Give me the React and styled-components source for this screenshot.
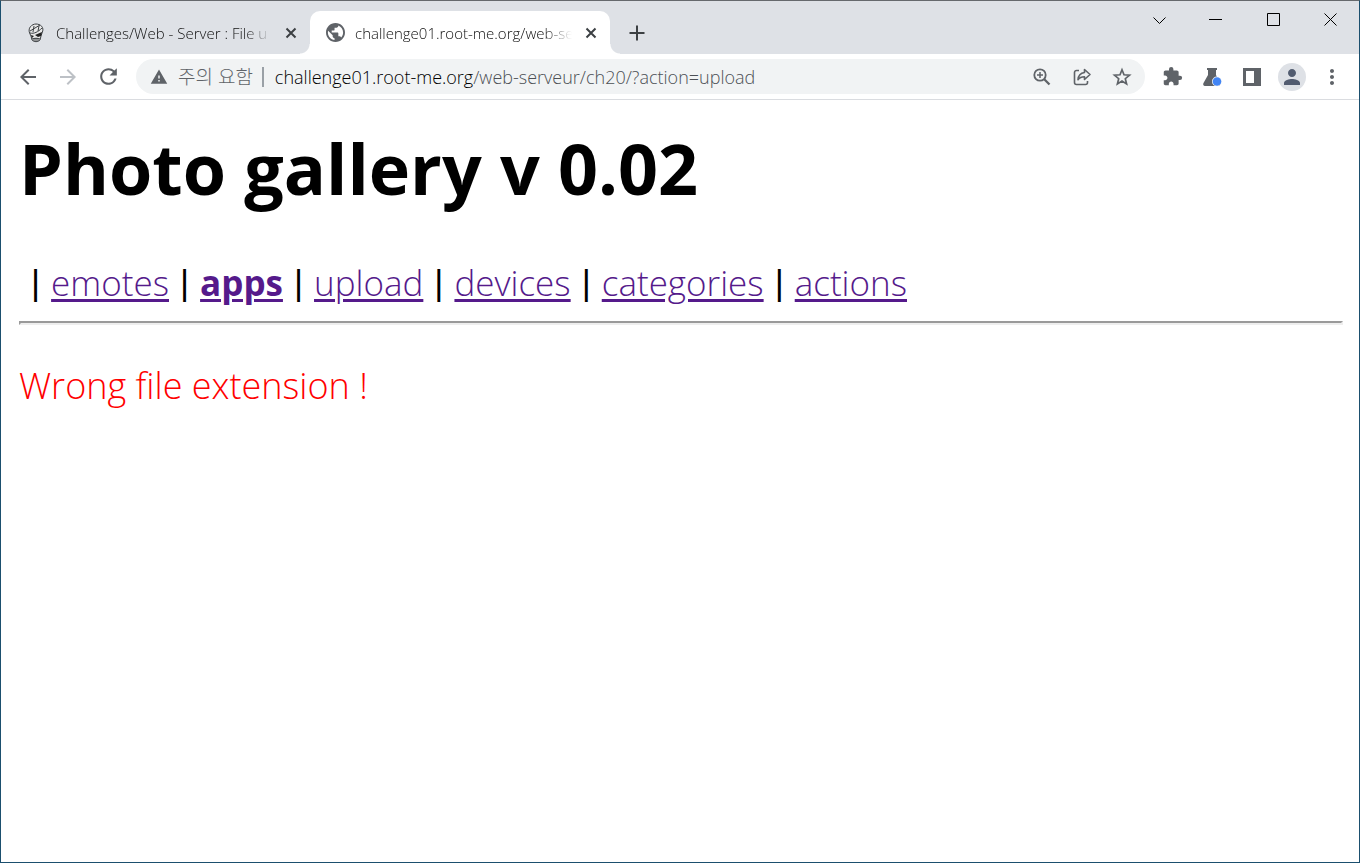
import React from "react";
import styled, { createGlobalStyle } from "styled-components";
import {
  MdArrowBack, MdArrowForward, MdRefresh, MdWarning,
  MdExtension, MdPublic, MdPerson, MdMoreVert,
} from "react-icons/md";

const Global = createGlobalStyle`
  *, *::before, *::after { box-sizing: border-box; }
  body {
    margin: 0;
    background: #fff;
    font-family: "Open Sans", "Noto Sans CJK KR", sans-serif;
    font-weight: 300;
  }
`;

const BrowserWindow = styled.div`
  min-height: 100vh;
  display: flex;
  flex-direction: column;
  border: 1px solid #1b4f6e;
  border-top-color: #66696d;
`;

const TabStrip = styled.header`
  height: 53px;
  display: flex;
  align-items: flex-end;
  background: #dee1e6;
  padding-left: 9px;
`;

const Tab = styled.div`
  position: relative;
  width: 300px;
  height: 43px;
  display: flex;
  align-items: center;
  gap: 10px;
  padding: 0 10px 0 16px;
  color: #111;
  background: ${(p) => (p.$active ? "#fff" : "transparent")};
  border-radius: 10px 10px 0 0;
  ${(p) => p.$active && `
    &::before, &::after {
      content: "";
      position: absolute;
      bottom: 0;
      width: 10px;
      height: 10px;
    }
    &::before { left: -10px; background: radial-gradient(circle at 0 0, transparent 9px, #fff 10px); }
    &::after { right: -10px; background: radial-gradient(circle at 100% 0, transparent 9px, #fff 10px); }
  `}
`;

const TabTitle = styled.span`
  flex: 1;
  overflow: hidden;
  white-space: nowrap;
  font-size: 15px;
  line-height: 22px;
  mask-image: linear-gradient(to right, #000 calc(100% - 28px), transparent);
`;

const IconButton = styled.button`
  display: flex;
  align-items: center;
  justify-content: center;
  width: ${(p) => p.$size || 40}px;
  height: ${(p) => p.$height || p.$size || 40}px;
  flex: none;
  padding: 0;
  border: 0;
  background: none;
  color: ${(p) => p.$color || "#5f6368"};
`;

const WindowControls = styled.div`
  display: flex;
  align-self: flex-start;
  margin-left: auto;
`;

const Toolbar = styled.div`
  height: 46px;
  display: flex;
  align-items: center;
  padding: 0 7px;
  border-bottom: 1px solid #dadce0;
`;

const AddressBar = styled.form`
  flex: 1;
  min-width: 0;
  height: 35px;
  display: flex;
  align-items: center;
  margin: 0 7px 0 8px;
  padding: 0 3px 0 14px;
  border-radius: 18px;
  background: #f1f3f4;
  font-size: 18px;
  line-height: 24px;
  color: #5f6368;
`;

const Security = styled.button`
  display: flex;
  align-items: center;
  gap: 10px;
  flex: none;
  padding: 0 9px 0 0;
  border: 0;
  background: none;
  color: inherit;
  font: inherit;
  font-size: 19px;
`;

const Divider = styled.span`
  width: 2px;
  height: 20px;
  margin-right: 11px;
  background: #9aa0a6;
`;

const Url = styled.a`
  flex: 1;
  overflow: hidden;
  white-space: nowrap;
  color: #4c5055;
  text-decoration: none;
`;

const Host = styled.span`
  color: #000;
`;

const Avatar = styled.span`
  display: flex;
  align-items: center;
  justify-content: center;
  width: 28px;
  height: 28px;
  border-radius: 50%;
  background: #dee1e6;
  color: #525c70;
`;

const Page = styled.main`
  flex: 1;
  padding: 0 16px 0 18px;
  font-size: 36px;
  line-height: 48px;
`;

const Title = styled.h1`
  margin: 21px 0 44px;
  font-size: 70px;
  line-height: 94px;
  font-weight: 700;
  color: #000;
`;

const Nav = styled.nav`
  display: flex;
  flex-wrap: wrap;
  gap: 11px;
  padding-left: 12px;
  font-size: 35px;
`;

const NavItem = styled.span`
  display: flex;
  gap: 11px;
`;

const Pipe = styled.span`
  font-family: "Liberation Sans", sans-serif;
  font-weight: 400;
  color: #000;
`;

const NavLink = styled.a`
  color: #551a8b;
  font-weight: ${(p) => (p.$current ? 700 : 300)};
  text-decoration: underline;
  text-decoration-thickness: 3px;
  text-underline-offset: 3px;
`;

const Rule = styled.hr`
  margin: 14px 0 37px;
  border: 2px solid;
  border-color: #9a9a9a #eee #eee #9a9a9a;
`;

const ErrorText = styled.p`
  margin: 0;
  color: #f00;
`;

const RootMeIcon = () => (
  <svg width="20" height="20" viewBox="0 0 20 20" fill="none" stroke="#3c4043">
    <path d="M4 11C1 5 6 1 10 1s9 3 6 9l-1 3-1 4c-2 2.200-6 2.200-8 0l-1-4z" fill="#e8e8e8" />
    <path d="M4 8l10-6M4 10c4 1 8-1 12-5M7 9l1-6m4 5l1-5" />
    <path d="M9 12l7-3-1 4-3 1zM5 12l3 1-2 2z" fill="#222" stroke="none" />
    <path d="M6 16c2-1 6-1 8 0M8 15v3m2-3v3m2-3v3" />
  </svg>
);

const CloseIcon = () => (
  <svg width="12" height="12" viewBox="0 0 12 12" fill="none" stroke="currentColor" strokeWidth="2">
    <path d="M1.500 1.500l9 9m0-9l-9 9" />
  </svg>
);

const PlusIcon = () => (
  <svg width="16" height="16" viewBox="0 0 16 16" fill="none" stroke="currentColor" strokeWidth="2">
    <path d="M8 .5v15M.5 8h15" />
  </svg>
);

const ZoomIcon = () => (
  <svg width="18" height="18" viewBox="0 0 18 18" fill="none" stroke="#5f6368" strokeWidth="1.800">
    <circle cx="7" cy="7" r="5.700" />
    <path d="M4 7h6M7 4v6" strokeWidth="1.500" />
    <path d="M11 11l5.500 5.500" strokeWidth="2.300" />
  </svg>
);

const StarIcon = () => (
  <svg width="20" height="20" viewBox="0 0 20 20" fill="none" stroke="#5f6368" strokeWidth="1.700">
    <path d="M10 2.800l2 5 5.500.4-4.200 3.500 1.300 5.300-4.600-2.900L5.400 17l1.300-5.300-4.200-3.500 5.500-.4z" />
  </svg>
);

const ShareIcon = () => (
  <svg width="20" height="20" viewBox="0 0 20 20" fill="none" stroke="#5f6368" strokeWidth="1.600" strokeLinejoin="round">
    <path d="M7 3.500H4.500a2 2 0 0 0-2 2v10a2 2 0 0 0 2 2h9a2 2 0 0 0 2-2V14" />
    <path d="M12.500 2.500l5.500 5-5.500 5V9.700c-3 0-5 .8-6.500 3 .3-4 2.500-6.700 6.500-7.200z" />
  </svg>
);

const FlaskIcon = () => (
  <svg width="20" height="20" viewBox="0 0 20 20">
    <path d="M5 1h10v2h-1v5l4 8c.7 1.500 0 3-1.500 3H3c-1.600 0-2.300-1.500-1.500-3L6 8V3H5z" fill="#5f6368" />
    <circle cx="15" cy="14.500" r="5" fill="#f8f9fa" />
    <circle cx="15" cy="14.500" r="4.300" fill="#4285f4" />
  </svg>
);

const SidePanelIcon = () => (
  <svg width="18" height="18" viewBox="0 0 18 18">
    <path fillRule="evenodd" d="M0 0h18v18H0zM3 3v12h8V3z" fill="#5f6368" />
  </svg>
);

const windowIcons = [
  ["Search tabs", "M0.500 4.500l6 6 6-6", 56],
  ["Minimize", "M0 6.500h13", 57],
  ["Maximize", "M0.500 0.500h12v12h-12z", 58],
  ["Close", "M0.500 0.500l12 12m0-12l-12 12", 57],
];

const links = ["emotes", "apps", "upload", "devices", "categories", "actions"];

export default function App() {
  return (
    <>
      <Global />
      <BrowserWindow>
        <TabStrip>
          <Tab>
            <RootMeIcon />
            <TabTitle>Challenges/Web - Server : File u</TabTitle>
            <IconButton $size={18} $color="#3c4043" aria-label="Close tab"><CloseIcon /></IconButton>
          </Tab>
          <Tab $active>
            <MdPublic size={19} viewBox="2 2 20 20" color="#5f6368" />
            <TabTitle>challenge01.root-me.org/web-se</TabTitle>
            <IconButton $size={18} $color="#3c4043" aria-label="Close tab"><CloseIcon /></IconButton>
          </Tab>
          <IconButton $size={54} $height={43} $color="#3c4043" aria-label="New tab"><PlusIcon /></IconButton>
          <WindowControls>
            {windowIcons.map(([label, d, w]) => (
              <IconButton key={label} $size={w} $height={36} aria-label={label}>
                <svg width="13" height="13" viewBox="0 0 13 13" fill="none" stroke="#000">
                  <path d={d} />
                </svg>
              </IconButton>
            ))}
          </WindowControls>
        </TabStrip>
        <Toolbar>
          <IconButton aria-label="Back"><MdArrowBack size={24} /></IconButton>
          <IconButton $color="#bdc1c6" aria-label="Forward"><MdArrowForward size={24} /></IconButton>
          <IconButton aria-label="Reload"><MdRefresh size={25} /></IconButton>
          <AddressBar>
            <Security type="button"><MdWarning size={18} />주의 요함</Security>
            <Divider />
            <Url href="#"><Host>challenge01.root-me.org</Host>/web-serveur/ch20/?action=upload</Url>
            <IconButton type="button" aria-label="Zoom"><ZoomIcon /></IconButton>
            <IconButton type="button" aria-label="Share"><ShareIcon /></IconButton>
            <IconButton type="button" aria-label="Bookmark"><StarIcon /></IconButton>
          </AddressBar>
          <IconButton aria-label="Extensions"><MdExtension size={21} /></IconButton>
          <IconButton aria-label="Experiments"><FlaskIcon /></IconButton>
          <IconButton aria-label="Side panel"><SidePanelIcon /></IconButton>
          <IconButton aria-label="Profile"><Avatar><MdPerson size={24} /></Avatar></IconButton>
          <IconButton aria-label="Menu"><MdMoreVert size={24} /></IconButton>
        </Toolbar>
        <Page>
          <Title>Photo gallery v 0.02</Title>
          <Nav>
            {links.map((name) => (
              <NavItem key={name}>
                <Pipe>|</Pipe>
                <NavLink href="#" $current={name === "apps"}>{name}</NavLink>
              </NavItem>
            ))}
          </Nav>
          <Rule />
          <ErrorText>Wrong file extension !</ErrorText>
        </Page>
      </BrowserWindow>
    </>
  );
}
